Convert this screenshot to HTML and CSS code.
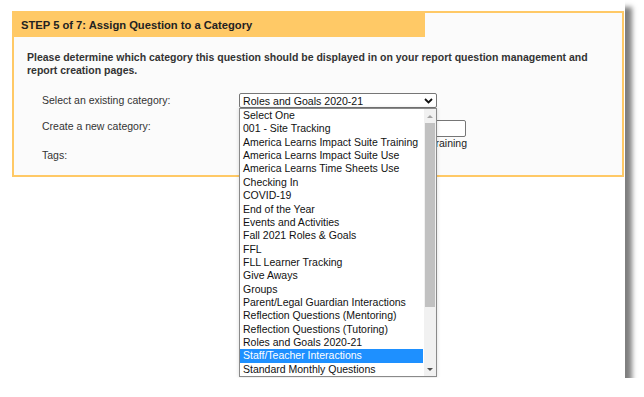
FILE: index.html
```html
<!DOCTYPE html>
<html lang="en">
<head>
    <meta charset="UTF-8">
    <title>Assign Question to a Category</title>
    <link rel="stylesheet" href="styles.css">
</head>
<body>

<div class="screen">
    <div class="panel">
        <div class="panel-head">STEP 5 of 7: Assign Question to a Category</div>
        <div class="panel-body">
            <p class="intro">Please determine which category this question should be displayed in on your report question management and report creation pages.</p>

            <div class="row row-select">
                <span class="label">Select an existing category:</span>
                <div class="control">
                    <div class="select">
                        <span>Roles and Goals 2020-21</span>
                        <svg class="chevron" width="9" height="6" viewBox="0 0 9 6"><path d="M1 1 L4.5 4.5 L8 1" fill="none" stroke="#111" stroke-width="1.8"/></svg>
                    </div>
                    <div class="listbox">
                        <ul class="options">
                            <li>Select One</li>
                            <li>001 - Site Tracking</li>
                            <li>America Learns Impact Suite Training</li>
                            <li>America Learns Impact Suite Use</li>
                            <li>America Learns Time Sheets Use</li>
                            <li>Checking In</li>
                            <li>COVID-19</li>
                            <li>End of the Year</li>
                            <li>Events and Activities</li>
                            <li>Fall 2021 Roles &amp; Goals</li>
                            <li>FFL</li>
                            <li>FLL Learner Tracking</li>
                            <li>Give Aways</li>
                            <li>Groups</li>
                            <li>Parent/Legal Guardian Interactions</li>
                            <li>Reflection Questions (Mentoring)</li>
                            <li>Reflection Questions (Tutoring)</li>
                            <li>Roles and Goals 2020-21</li>
                            <li class="selected">Staff/Teacher Interactions</li>
                            <li>Standard Monthly Questions</li>
                        </ul>
                        <div class="scrollbar">
                            <div class="arrow arrow-up"></div>
                            <div class="track"><div class="thumb"></div></div>
                            <div class="arrow arrow-down"></div>
                        </div>
                    </div>
                </div>
            </div>

            <div class="row row-new">
                <span class="label">Create a new category:</span>
                <div class="control">
                    <div class="text-input"></div>
                    <div class="hint">e.g. Impact Suite Training</div>
                </div>
            </div>

            <div class="row row-tags">
                <span class="label">Tags:</span>
            </div>
        </div>
    </div>
</div>

</body>
</html>
```

FILE: styles.css
```css
body {
    margin: 0;
    padding: 0;
    background: #fff;
    font-family: 'Liberation Sans', Arial, sans-serif;
    color: #333;
}
.screen {
    width: 625px;
    height: 378px;
    background: #fff;
    box-shadow: 7px 7px 5px rgba(0, 0, 0, 0.5);
    padding-top: 11px;
    padding-left: 12px;
    box-sizing: border-box;
}
.panel {
    width: 612px;
    border: 2px solid #ffc966;
    border-top: none;
    background: #fbfbfb;
    box-sizing: border-box;
    position: relative;
}
.panel::before {
    content: '';
    display: block;
    height: 2px;
    background: #ffc966;
    margin: 0 -2px;
}
.panel-head {
    width: 404px;
    height: 24px;
    margin-left: -2px;
    padding-left: 9px;
    background: #ffc966;
    font-weight: bold;
    font-size: 11.2px;
    line-height: 24px;
    color: #222;
}
.panel-body {
    padding: 14px 20px 13px 13px;
}
.intro {
    margin: 0;
    font-size: 10.5px;
    font-weight: bold;
    line-height: 13px;
    color: #333;
    width: 568px;
}
.row {
    display: flex;
    align-items: flex-start;
    padding-left: 15px;
}
.label {
    width: 197px;
    flex: none;
    font-size: 10.5px;
    line-height: 13px;
}
.control {
    position: relative;
}
.row-select {
    margin-top: 16px;
    height: 15px;
}
.row-select .label {
    line-height: 15px;
}
.select {
    width: 198px;
    height: 15px;
    border: 1px solid #767676;
    border-radius: 2px;
    background: #fff;
    box-sizing: border-box;
    display: flex;
    align-items: center;
    justify-content: space-between;
    padding: 0 3px 0 3px;
    font-size: 10.6px;
    color: #111;
}
.listbox {
    position: absolute;
    top: 15px;
    left: 0;
    width: 198px;
    height: 269px;
    border: 1px solid #8a8a8a;
    background: #fff;
    box-sizing: border-box;
    display: flex;
    box-shadow: 0 0 4px rgba(0, 0, 0, 0.15);
    z-index: 2;
}
.options {
    list-style: none;
    margin: 0;
    padding: 0;
    flex: 1;
    min-width: 0;
}
.options li {
    height: 13.37px;
    line-height: 13.37px;
    padding-left: 3px;
    font-size: 10.5px;
    color: #111;
    white-space: nowrap;
    overflow: hidden;
}
.options li.selected {
    background: #1e90ff;
    color: #fff;
}
.scrollbar {
    width: 12px;
    flex: none;
    background: #f1f1f1;
    display: flex;
    flex-direction: column;
    margin-left: 1px;
}
.arrow {
    height: 14px;
    display: flex;
    align-items: center;
    justify-content: center;
}
.arrow::after {
    content: '';
    border-left: 3px solid transparent;
    border-right: 3px solid transparent;
}
.arrow-up::after {
    border-bottom: 3px solid #a3a3a3;
}
.arrow-down::after {
    border-top: 3px solid #505050;
}
.track {
    flex: 1;
}
.thumb {
    height: 184px;
    margin: 0 1px;
    background: #c1c1c1;
}
.row-new {
    margin-top: 12px;
}
.text-input {
    width: 227px;
    height: 17px;
    border: 1px solid #767676;
    border-radius: 2px;
    background: #fff;
    box-sizing: border-box;
}
.hint {
    width: 228px;
    text-align: right;
    font-size: 10.5px;
    line-height: 12px;
    color: #222;
}
.row-tags {
    height: 13px;
}
```
